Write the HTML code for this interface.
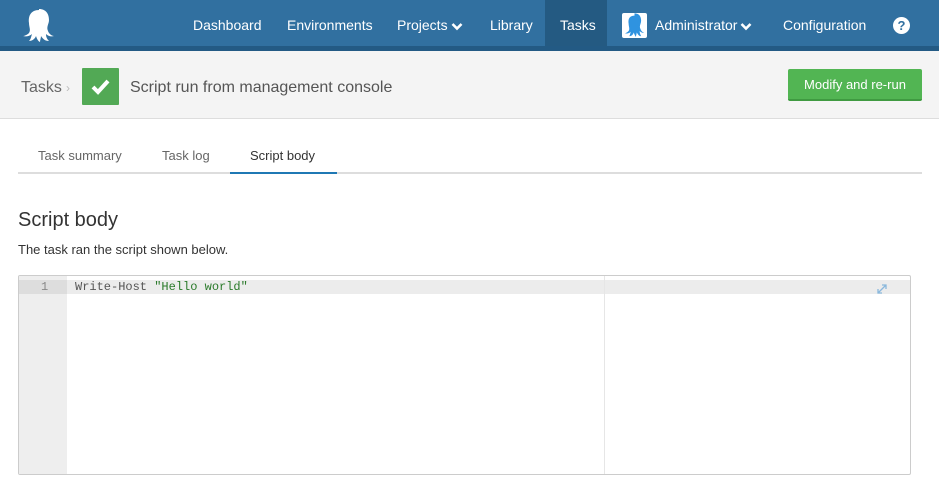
<!DOCTYPE html>
<html><head><meta charset="utf-8"><style>
*{box-sizing:border-box;margin:0;padding:0}
body{width:939px;height:496px;overflow:hidden;background:#fff;font-family:"Liberation Sans",sans-serif;color:#333}
.nav{position:absolute;top:0;left:0;width:939px;height:46px;background:#3170a0}
.navb{position:absolute;top:46px;left:0;width:939px;height:5px;background:#235a84}
.nav a{position:absolute;top:0;height:46px;line-height:50px;color:#fff;font-size:14px;white-space:nowrap}
.hdr{position:absolute;top:51px;left:0;width:939px;height:68px;background:#f4f4f4;border-bottom:1px solid #ddd}
.tab{position:absolute;top:148px;font-size:13px;color:#666}
.chev{display:inline-block;vertical-align:middle;margin-left:3px}
</style></head><body>
<div class="nav">
<svg style="position:absolute;left:22px;top:9px" width="34" height="33" viewBox="0 0 34 33"><path d="M17 1C9 1 6 7 7 14c0 4 2 7 0 10-2 2-5 3-6 3 3 1 7 0 9-2-1 3-1 5-3 7 3 0 6-2 7-5 1 3 2 5 4 6 0-2 1-4 1-6 2 3 4 5 8 5-2-2-3-4-3-7 2 2 5 3 8 2-2 0-5-2-6-5-2-4 1-7 1-11 0-6-3-11-10-11z" fill="#fff"/></svg>
<a style="left:193px">Dashboard</a>
<a style="left:287px">Environments</a>
<a style="left:397px">Projects<svg class="chev" width="12" height="9" viewBox="0 0 12 9"><path d="M1.5 2l4.5 4.5L10.5 2" stroke="#fff" stroke-width="2.6" fill="none"/></svg></a>
<a style="left:490px">Library</a>
<div style="position:absolute;left:545px;top:0;width:62px;height:46px;background:#245a82"></div>
<a style="left:560px">Tasks</a>
<div style="position:absolute;left:622px;top:13px;width:25px;height:25px;background:#fff;border-radius:2px"><svg width="25" height="25" viewBox="0 0 34 33"><path d="M17 3C10 3 8 8 9 14c0 4 2 7 0 10-2 2-4 3-5 3 3 1 6 0 8-2-1 3-1 4-2 6 3 0 5-2 6-5 1 3 2 5 3 6 0-2 1-4 1-6 2 3 3 5 6 5-1-2-2-4-2-7 2 2 4 3 6 2-2 0-4-2-5-5-2-4 1-7 1-11 0-6-3-10-9-10z" fill="#2f93e0"/></svg></div>
<a style="left:655px">Administrator<svg class="chev" width="12" height="9" viewBox="0 0 12 9"><path d="M1.5 2l4.5 4.5L10.5 2" stroke="#fff" stroke-width="2.6" fill="none"/></svg></a>
<a style="left:783px">Configuration</a>
<div style="position:absolute;left:893px;top:17px;width:17px;height:17px;border-radius:50%;background:#fff;color:#3170a0;font-weight:bold;font-size:13px;text-align:center;line-height:17px">?</div>
</div>
<div class="navb"></div>
<div class="hdr">
<div style="position:absolute;left:21px;top:28px;font-size:16px;color:#666">Tasks</div>
<div style="position:absolute;left:66px;top:30px;font-size:12px;color:#bbb">›</div>
<div style="position:absolute;left:82px;top:17px;width:37px;height:37px;background:#52a955;border-radius:1px"><svg width="37" height="37" viewBox="0 0 37 37"><path d="M11 19l5 5 10-11" stroke="#fff" stroke-width="4" fill="none"/></svg></div>
<div style="position:absolute;left:130px;top:28px;font-size:16px;color:#555">Script run from management console</div>
<div style="position:absolute;left:788px;top:18px;width:134px;height:32px;background:#52b553;border-bottom:2px solid #3f9a41;border-radius:2px;color:#fff;font-size:13px;text-align:center;line-height:32px">Modify and re-run</div>
</div>
<div class="tab" style="left:38px">Task summary</div>
<div class="tab" style="left:162px">Task log</div>
<div class="tab" style="left:250px;color:#333">Script body</div>
<div style="position:absolute;left:18px;top:172px;width:904px;height:2px;background:#ddd"></div>
<div style="position:absolute;left:230px;top:172px;width:107px;height:2px;background:#1f78b4"></div>
<div style="position:absolute;left:18px;top:209px;font-size:20px;color:#333">Script body</div>
<div style="position:absolute;left:18px;top:242px;font-size:13px;color:#333">The task ran the script shown below.</div>
<div style="position:absolute;left:18px;top:275px;width:893px;height:200px;border:1px solid #ccc;border-radius:2px;overflow:hidden">
<div style="position:absolute;left:0;top:0;width:48px;height:200px;background:#eee"></div>
<div style="position:absolute;left:0;top:4px;width:892px;height:14px;background:#ececec"></div>
<div style="position:absolute;left:0;top:4px;width:48px;height:14px;background:#ddd"></div>
<div style="position:absolute;left:22px;top:4px;font:12px/14px 'Liberation Mono',monospace;color:#888">1</div>
<div style="position:absolute;left:56px;top:4px;font:12px/14px 'Liberation Mono',monospace;color:#555">Write-Host <span style="color:#2a7a2a">"Hello world"</span></div>
<div style="position:absolute;left:585px;top:0;width:1px;height:200px;background:#e6e6e6"></div>
<svg style="position:absolute;left:857px;top:7px" width="12" height="12" viewBox="0 0 12 12"><path d="M2 10L10 2M6 2h4v4M2 6v4h4" stroke="#8ab8dc" stroke-width="1.3" fill="none"/></svg>
</div>
</body></html>
